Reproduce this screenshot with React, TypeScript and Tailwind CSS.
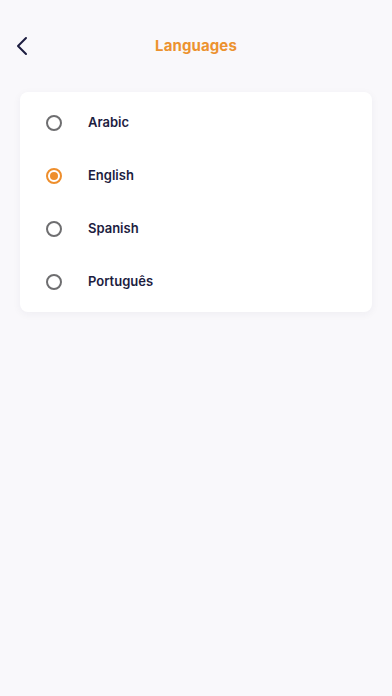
import React, { useState } from 'react';

const languages = ['Arabic', 'English', 'Spanish', 'Português'];

function Radio({ checked }: { checked: boolean }) {
  return (
    <span
      className={`flex h-4 w-4 items-center justify-center rounded-full border-2 ${
        checked ? 'border-[#ee8e2c]' : 'border-[#6e6e70]'
      }`}
    >
      {checked && <span className="h-2 w-2 rounded-full bg-[#ee8e2c]" />}
    </span>
  );
}

export default function App() {
  const [selected, setSelected] = useState('English');

  return (
    <div className="min-h-[696px] w-full bg-[#f9f8fb] font-['Inter',sans-serif]">
      <header className="relative flex h-[88px] items-center justify-center pt-[4px]">
        <button className="absolute left-[12px] top-[32px] p-1 text-[#1d1d3f]">
          <svg width="12" height="20" viewBox="0 0 12 20" fill="none">
            <path
              d="M10 2L2 10L10 18"
              stroke="currentColor"
              strokeWidth="2"
              strokeLinecap="round"
              strokeLinejoin="round"
            />
          </svg>
        </button>
        <h1 className="text-[15px] font-bold tracking-[0.1px] text-[#ec922f]">
          Languages
        </h1>
      </header>

      <div className="mx-5 mt-1 rounded-lg bg-white pb-[4px] pt-[4px] shadow-[0_2px_8px_rgba(40,30,80,0.05)]">
        {languages.map((lang) => (
          <button
            key={lang}
            onClick={() => setSelected(lang)}
            className="flex h-[53px] w-full items-center pl-[26px] text-left"
          >
            <Radio checked={selected === lang} />
            <span className="ml-[26px] text-[13px] font-semibold text-[#1d1d3f]">
              {lang}
            </span>
          </button>
        ))}
      </div>
    </div>
  );
}
